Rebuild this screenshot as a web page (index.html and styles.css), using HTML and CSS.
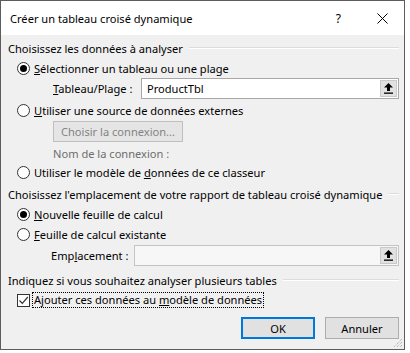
FILE: index.html
```html
<!DOCTYPE html>
<html lang="fr">

<head>
    <meta http-equiv="Content-Type" content="text/html; charset=UTF-8">
    <meta name="viewport" content="width=device-width, initial-scale=1.0">
    <title>Créer un tableau croisé dynamique</title>
    <link rel="stylesheet" href="styles.css">
</head>

<body>
    <div class="dialog">
        <div class="titlebar">
            <span class="title">Créer un tableau croisé dynamique</span>
            <span class="help">?</span>
            <svg class="close" width="11" height="11" viewBox="0 0 11 11">
                <path d="M0.5 0.5 L10.5 10.5 M10.5 0.5 L0.5 10.5" stroke="#000" stroke-width="1" fill="none" />
            </svg>
        </div>

        <div class="content">
            <div class="group-title">Choisissez les données à analyser</div>

            <label class="radio-row">
                <span class="radio checked"></span>
                <span><u>S</u>électionner un tableau ou une plage</span>
            </label>

            <div class="field-row">
                <span class="field-label"><u>T</u>ableau/Plage :</span>
                <div class="textbox">
                    <span class="value">ProductTbl</span>
                    <span class="pick-btn">
                        <svg width="9" height="11" viewBox="0 0 9 11">
                            <path d="M4.5 0 L9 4.5 L6 4.5 L6 8 L3 8 L3 4.5 L0 4.5 Z" fill="#000" />
                            <rect x="0" y="9.5" width="9" height="1.3" fill="#000" />
                        </svg>
                    </span>
                </div>
            </div>

            <label class="radio-row r-ext">
                <span class="radio"></span>
                <span><u>U</u>tiliser une source de données externes</span>
            </label>

            <div class="button-row">
                <span class="btn-disabled">Choisir la connexion...</span>
            </div>

            <div class="conn-name">Nom de la connexion :</div>

            <label class="radio-row">
                <span class="radio"></span>
                <span>Utiliser le modèle de <u>d</u>onnées de ce classeur</span>
            </label>

            <div class="group-title g2">Choisissez l'emplacement de votre rapport de tableau croisé dynamique</div>

            <label class="radio-row">
                <span class="radio checked"></span>
                <span><u>N</u>ouvelle feuille de calcul</span>
            </label>

            <label class="radio-row">
                <span class="radio"></span>
                <span><u>F</u>euille de calcul existante</span>
            </label>

            <div class="field-row loc-row">
                <span class="field-label loc-label">Emp<u>l</u>acement :</span>
                <div class="textbox disabled">
                    <span class="value"></span>
                    <span class="pick-btn">
                        <svg width="9" height="11" viewBox="0 0 9 11">
                            <path d="M4.5 0 L9 4.5 L6 4.5 L6 8 L3 8 L3 4.5 L0 4.5 Z" fill="#000" />
                            <rect x="0" y="9.5" width="9" height="1.3" fill="#000" />
                        </svg>
                    </span>
                </div>
            </div>

            <div class="group-title g3">Indiquez si vous souhaitez analyser plusieurs tables</div>

            <label class="check-row">
                <span class="checkbox">
                    <svg width="11" height="11" viewBox="0 0 11 11">
                        <path d="M1.5 5.5 L4.3 8.3 L9.8 2" stroke="#333" stroke-width="1.2" fill="none" />
                    </svg>
                </span>
                <span class="focus">Ajouter ces données au <u>m</u>odèle de données</span>
            </label>

            <div class="footer">
                <button class="btn default">OK</button>
                <button class="btn">Annuler</button>
            </div>
        </div>

        <svg class="grip" width="12" height="12" viewBox="0 0 12 12">
            <path d="M11 3 L3 11 M11 6 L6 11 M11 9 L9 11" stroke="#a0a0a0" stroke-width="1" stroke-dasharray="1 1" fill="none" />
        </svg>
    </div>
</body>

</html>
```

FILE: styles.css
```css
body {
    margin: 0;
    background: #ffffff;
    font-family: "Noto Sans", sans-serif;
    font-size: 11.1px;
    color: #000000;
}

.dialog {
    position: relative;
    width: 403px;
    height: 348px;
    border: 1px solid #5c5c5c;
    background: #f0f0f0;
    display: flex;
    flex-direction: column;
}

.titlebar {
    height: 34px;
    background: #ffffff;
    display: flex;
    align-items: center;
    padding-left: 9px;
}

.title {
    flex: 1;
}

.help {
    margin-right: 36px;
    font-size: 12px;
}

.close {
    margin-right: 16px;
}

.content {
    padding: 3px 5px 0 7px;
    display: flex;
    flex-direction: column;
}

.group-title {
    height: 20px;
    display: flex;
    align-items: center;
    white-space: nowrap;
}

.group-title::after {
    content: "";
    flex: 1;
    margin-left: 6px;
    border-top: 1px solid #dcdcdc;
    border-bottom: 1px solid #ffffff;
}

.g2 {
    margin-top: 2px;
}

.g3 {
    margin-top: 4px;
}

.radio-row {
    height: 20px;
    display: flex;
    align-items: center;
    padding-left: 9px;
    gap: 4px;
}

.r-ext {
    margin-top: 1px;
}

.radio {
    width: 11px;
    height: 11px;
    border: 1px solid #333333;
    border-radius: 50%;
    background: #ffffff;
    display: flex;
    align-items: center;
    justify-content: center;
}

.radio.checked::after {
    content: "";
    width: 7px;
    height: 7px;
    border-radius: 50%;
    background: #000000;
}

.field-row {
    height: 21px;
    display: flex;
    align-items: center;
    padding-left: 45px;
}

.field-label {
    width: 88px;
    white-space: nowrap;
}

.textbox {
    flex: 1;
    height: 19px;
    border: 1px solid #a8a8a8;
    background: #ffffff;
    display: flex;
    align-items: center;
}

.textbox.disabled {
    background: #f7f7f7;
    border-color: #c4c4c4;
}

.textbox .value {
    flex: 1;
    padding-left: 5px;
}

.pick-btn {
    width: 17px;
    height: 17px;
    margin-right: 1px;
    background: #e1e1e1;
    border: 1px solid #c9c9c9;
    box-sizing: border-box;
    display: flex;
    align-items: center;
    justify-content: center;
}

.loc-row {
    margin-top: 1px;
    padding-left: 43px;
}

.loc-label {
    width: 83px;
}

.button-row {
    height: 21px;
    margin-top: 1px;
    padding-left: 45px;
    display: flex;
}

.btn-disabled {
    width: 130px;
    height: 21px;
    box-sizing: border-box;
    border: 1px solid #bfbfbf;
    background: #e5e5e5;
    color: #838383;
    display: flex;
    align-items: center;
    justify-content: center;
}

.conn-name {
    height: 18px;
    margin-top: 2px;
    padding-left: 45px;
    display: flex;
    align-items: center;
    color: #6d6d6d;
}

.check-row {
    height: 20px;
    display: flex;
    align-items: center;
    padding-left: 9px;
    gap: 2px;
}

.checkbox {
    width: 11px;
    height: 11px;
    border: 1px solid #333333;
    background: #ffffff;
    display: flex;
    align-items: center;
    justify-content: center;
}

.focus {
    border: 1px dotted #000000;
    padding: 0 1px;
    line-height: 14px;
}

.footer {
    margin-top: 7px;
    display: flex;
    justify-content: flex-end;
    gap: 10px;
}

.btn {
    width: 74px;
    height: 22px;
    box-sizing: border-box;
    border: 1px solid #adadad;
    background: #e1e1e1;
    font-family: "Noto Sans", sans-serif;
    font-size: 11.1px;
    color: #000000;
    padding: 0;
}

.btn.default {
    border: 2px solid #0078d7;
}

.grip {
    position: absolute;
    right: 1px;
    bottom: 1px;
}
```
